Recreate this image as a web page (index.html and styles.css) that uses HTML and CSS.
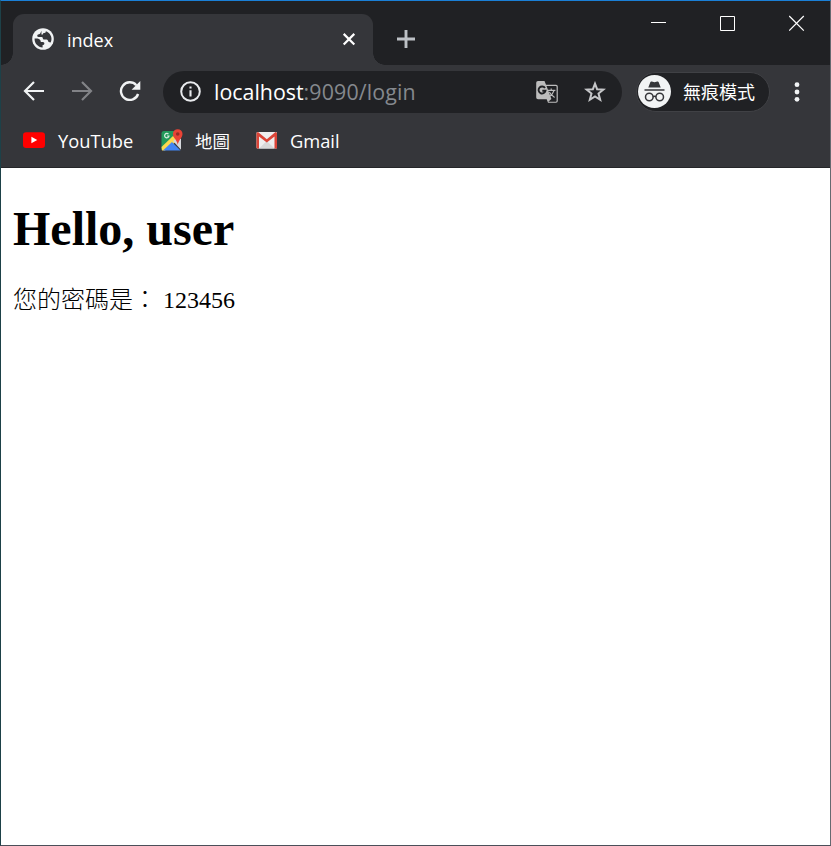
FILE: index.html
```html
<!DOCTYPE html>
<html lang="zh-Hant">
<head>
<meta charset="utf-8">
<title>index</title>
<link rel="stylesheet" href="styles.css">
</head>
<body>
<div class="window">
  <header class="tabstrip">
    <div class="tab">
      <svg class="globe" width="22" height="22" viewBox="0 0 22 22"><circle cx="11" cy="11" r="10.8" fill="#f1f3f4"/><path d="M9.5 2.7L8.2 5.4Q7.8 6.2 6.8 6.2Q5.2 6.3 5.2 7.7Q5.2 9 6.8 9H9.6Q10.8 9.1 10.8 10.3Q10.8 11.5 12 11.5H14.7Q16 11.6 16 12.9Q16 14.1 18.6 14.4Q19.5 12.9 19.5 11C19.5 7.5 17.2 4.5 13.9 3.2Q13.7 5.1 12.2 5.1Q10.8 5.1 10.8 6.5H9.4ZM2.6 10.5H5.5Q8.8 11 8.8 14H11Q12.4 14 12.4 15.5Q12.4 17 10.6 17V19.4C6 19.2 2.6 15.6 2.6 11Z" fill="#35363a"/></svg>
      <span class="tab-title">index</span>
      <svg class="tab-close" width="14" height="14" viewBox="0 0 14 14"><path d="M1.7 .9L12.3 11.5M12.3 .9L1.7 11.5" stroke="#fff" stroke-width="2.2"/></svg>
    </div>
    <svg class="new-tab" width="18" height="18" viewBox="0 0 18 18"><path d="M9 0V18M0 9H18" stroke="#bdc1c6" stroke-width="2.9"/></svg>
    <div class="controls">
      <svg width="16" height="16" viewBox="0 0 16 16"><path d="M0 7.5H15" stroke="#fff"/></svg>
      <svg width="16" height="16" viewBox="0 0 16 16"><path d="M.5 1.5H14.5V15.5H.5Z" stroke="#fff" fill="none"/></svg>
      <svg width="16" height="16" viewBox="0 0 16 16"><path d="M.2 1L14.8 15.6M14.8 1L.2 15.6" stroke="#fff" stroke-width="1.2"/></svg>
    </div>
  </header>
  <nav class="toolbar">
    <svg class="back" width="22" height="20" viewBox="0 0 22 20"><path d="M21 10H2.5M11 1L2 10L11 19" fill="none" stroke="#f1f3f4" stroke-width="2.2"/></svg>
    <svg class="forward" width="22" height="20" viewBox="0 0 22 20"><path d="M1 10H19.5M11 1L20 10L11 19" fill="none" stroke="#828387" stroke-width="2.2"/></svg>
    <svg class="reload" width="22" height="20" viewBox="0 0 22 20"><path d="M19.1 13A8.8 8.8 0 1 1 17.3 4.2" fill="none" stroke="#f1f3f4" stroke-width="2.4"/><path d="M21.3 0V8.8H12.6Z" fill="#f1f3f4"/></svg>
    <div class="omnibox">
      <svg class="info" width="21" height="21" viewBox="0 0 21 21"><circle cx="10.5" cy="10.5" r="9.3" fill="none" stroke="#e8eaed" stroke-width="2"/><path d="M10.5 9.3V15.5M10.5 5.4V7.6" stroke="#e8eaed" stroke-width="2.1"/></svg>
      <span class="url"><span class="host">localhost</span><span class="path">:9090/login</span></span>
      <svg class="translate" width="22" height="22" viewBox="0 0 22 22"><path d="M2 0H8.5L10 3.8H20Q21.8 3.8 21.8 5.6V20Q21.8 21.8 20 21.8H12L10.7 18.2H2Q.2 18.2 .2 16.4V1.8Q.2 0 2 0Z" fill="#bdbdbd"/><path d="M10.5 5L15.4 18L12.3 20.7H19.8Q20.6 20.7 20.6 19.8V5.8Q20.6 5 19.8 5Z" fill="#202124"/><path d="M9 7A3.5 3.5 0 1 0 9.5 9.7H6.3" fill="none" stroke="#202124" stroke-width="1.9"/><path d="M12 9.4H19.4M15.2 7.6V9.4M18 9.6Q17 13 13 16M13.3 11Q15 14 18.6 16.4" fill="none" stroke="#bdbdbd" stroke-width="1.2"/></svg>
      <svg class="star" width="22" height="22" viewBox="0 0 22 22"><path d="M11 2.7L13.1 8.2L19.4 8.6L14.5 12.5L16.2 18.8L11 15.4L5.8 18.8L7.5 12.5L2.6 8.6L8.9 8.2Z" fill="none" stroke="#c6c7c9" stroke-width="2"/></svg>
    </div>
    <div class="incognito">
      <svg width="33" height="33" viewBox="0 0 33 33"><circle cx="16.5" cy="16.5" r="16.5" fill="#f1f3f4"/><path d="M6.5 14.2H26.5V15.8H6.5ZM10.3 12.6L12.4 7Q12.8 6.2 13.8 6.5L16.5 7.3L19.2 6.5Q20.2 6.2 20.6 7L22.7 12.6Z" fill="#35363a"/><g fill="none" stroke="#35363a" stroke-width="1.5"><circle cx="11.3" cy="22" r="3.8"/><circle cx="21.7" cy="22" r="3.8"/><path d="M15 21.8Q16.5 20.7 18 21.8"/></g></svg>
      <span class="chip-label">無痕模式</span>
    </div>
    <svg class="menu" width="6" height="20" viewBox="0 0 6 20"><g fill="#f1f3f4"><circle cx="3" cy="2.7" r="2.4"/><circle cx="3" cy="10" r="2.4"/><circle cx="3" cy="17.3" r="2.4"/></g></svg>
  </nav>
  <nav class="bookmarks">
    <svg class="youtube-icon" width="22" height="22" viewBox="0 0 22 22"><rect x="0" y="3.3" width="22" height="15.6" rx="3.2" fill="#f00"/><path d="M8.4 7.8V14.2L14.2 11Z" fill="#fff"/></svg>
    <span class="youtube">YouTube</span>
    <svg class="maps-icon" width="22" height="22" viewBox="0 0 22 22"><path d="M.5 4.5Q.5 2 3 2H16L11 12L3 21H.5Z" fill="#23985a"/><path d="M.5 18L12 7L17 11L4 21.5H1Z" fill="#fdd84d"/><path d="M2 21.5L11 13L19.5 21.5Z" fill="#4285f4"/><path d="M12 12L17 8L20 10V20.8Z" fill="#d5d8dc"/><path d="M7.5 5.2A2.2 2.2 0 1 0 8 7H6" fill="none" stroke="#d9eee1" stroke-width="1.2"/><path d="M16.7 .2A4.8 4.8 0 0 1 21.5 5C21.5 8.8 17.8 10.5 16.8 15.8C15.8 10.5 11.9 8.8 11.9 5A4.8 4.8 0 0 1 16.7 .2Z" fill="#ea4335"/><circle cx="16.7" cy="5" r="1.8" fill="#962c26"/></svg>
    <span class="maps">地圖</span>
    <svg class="gmail-icon" width="22" height="22" viewBox="0 0 22 22"><rect x=".5" y="3" width="20.5" height="16.5" rx="1" fill="#eee"/><path d="M3 19.5L10.8 12L18.5 19.5Z" fill="#d8d8d8"/><path d="M.5 4.5Q.5 3 2 3L10.8 10.2L19.5 3Q21 3 21 4.5V19.5H18.5V7.5L10.8 13.5L3 7.5V19.5H1.5Q.5 19.5 .5 18.5Z" fill="#da4437"/></svg>
    <span class="gmail">Gmail</span>
  </nav>
  <main>
    <h1>Hello, user</h1>
    <p><span class="label">您的密碼是：</span> <span>123456</span></p>
  </main>
</div>
</body>
</html>
```
FILE: styles.css
```css
* { box-sizing: border-box; }
body { margin: 0; background: #fff; }
svg { display: block; flex: none; }
span { white-space: nowrap; }
.window {
  width: 831px; height: 846px; overflow: hidden;
  display: flex; flex-direction: column;
  border: 1px solid; border-color: #1a7fd6 #666970 #4b4f59 #1d4148;
  font-family: "Open Sans", "Noto Sans CJK TC", sans-serif;
  color: #fff;
}
.tabstrip { height: 64px; flex: none; display: flex; background: #202124; padding-left: 12px; }
.tab {
  position: relative; width: 360px; height: 51px; margin-top: 13px;
  display: flex; align-items: center; padding-left: 19px;
  background: #35363a; border-radius: 11px 11px 0 0;
}
.tab::before, .tab::after { content: ""; position: absolute; bottom: 0; width: 12px; height: 12px; }
.tab::before { left: -12px; background: radial-gradient(circle at 0 0, #202124 11.5px, #35363a 12px); }
.tab::after { right: -12px; background: radial-gradient(circle at 100% 0, #202124 11.5px, #35363a 12px); }
.globe { margin-bottom: 1px; }
.tab-title { margin-left: 13px; font-size: 18px; width: 275px; line-height: 26px; }
.new-tab { margin: 29px 0 0 24px; }
.controls { margin: 14px 25px 0 auto; display: flex; gap: 53px; }
.toolbar { height: 53px; flex: none; display: flex; align-items: center; background: #35363a; padding-left: 22px; }
.back, .forward, .reload { margin-bottom: 1px; }
.forward { margin-left: 26px; }
.reload { margin-left: 26px; }
.omnibox { width: 459px; height: 42px; margin-left: 22px; border-radius: 21px; background: #202124; display: flex; align-items: center; padding-left: 17px; }
.url { margin-left: 13px; width: 322px; font-size: 21.4px; line-height: 30px; }
.path { color: #85898e; letter-spacing: .12px; }
.star { margin-left: 26px; }
.incognito { width: 134px; height: 40px; margin-left: 14px; border: 1px solid #404145; border-radius: 20px; background: #202124; display: flex; align-items: center; padding-left: 1px; }
.chip-label { margin-left: 12px; font-size: 18px; line-height: 26px; }
.menu { margin-left: 24px; }
.bookmarks { height: 50px; flex: none; display: flex; align-items: center; padding: 0 0 4px 22px; background: #35363a; border-bottom: 1px solid #252629; font-size: 18.3px; line-height: 26px; }
.youtube-icon, .maps-icon, .gmail-icon { margin-bottom: 2px; }
.youtube { margin-left: 13px; width: 103px; }
.maps { margin-left: 12px; width: 61px; font-size: 17.5px; }
.gmail { margin-left: 12px; }
main { flex: 1; background: #fff; color: #000; padding: 0 12px; font-family: "Liberation Serif", "Noto Sans CJK TC", serif; font-size: 24px; }
h1 { margin: 34px 0 0; font-size: 48px; line-height: 54px; font-weight: 700; }
p { margin: 30px 0 0; line-height: 28px; }
.label { font-weight: 300; }
```
